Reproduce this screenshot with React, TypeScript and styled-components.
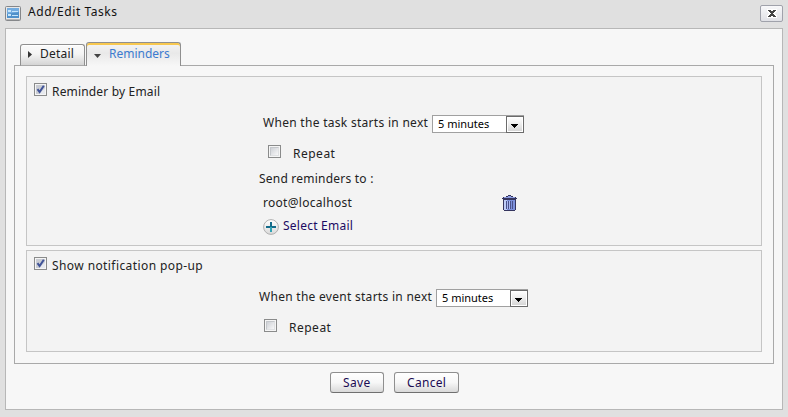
import React from "react";
import styled, { createGlobalStyle } from "styled-components";

const GlobalStyle = createGlobalStyle`
  * { box-sizing: border-box; }
  body { margin: 0; background: #e0e0e0; }
`;

const Window = styled.div`
  width: 788px;
  height: 417px;
  padding: 0 5px;
  background: #e0e0e0;
  font: 12px/18px "Noto Sans", sans-serif;
  color: #222;
`;

const TitleBar = styled.header`
  display: flex;
  align-items: flex-start;
  height: 28px;
  svg { margin-top: 6px; }
`;

const Text = styled.span<{ $w: number; $ls?: number; $color?: string; $top?: number; $left?: number; $size?: number }>`
  flex: none;
  width: ${(p) => p.$w}px;
  margin: ${(p) => p.$top ?? 0}px 0 0 ${(p) => p.$left ?? 0}px;
  font-size: ${(p) => p.$size ?? 12}px;
  letter-spacing: ${(p) => p.$ls ?? 0}px;
  color: ${(p) => p.$color ?? "#222"};
  white-space: nowrap;
  text-align: left;
`;

const CloseButton = styled.button`
  display: flex;
  width: 23px;
  height: 17px;
  margin: 5px 0 0 auto;
  padding: 3px 0 0 6px;
  border: 1px solid #a0a2ab;
  border-radius: 2px;
  background: linear-gradient(#f8f8fa, #e0e1e6);
  svg { flex: none; margin: 0; }
`;

const Panel = styled.main`
  width: 778px;
  height: 382px;
  padding: 13px 8px 0;
  border: 1px solid #b7b7b7;
  background: #f7f7f7;
`;

const Tabs = styled.nav`
  display: flex;
  align-items: flex-end;
  gap: 1px;
  height: 24px;
  margin: 0 0 -1px 6px;
`;

const Tab = styled.div<{ $active?: boolean }>`
  position: relative;
  display: flex;
  width: ${(p) => (p.$active ? 95 : 65)}px;
  height: ${(p) => (p.$active ? 24 : 22)}px;
  border: 1px solid #8f8f8f;
  border-bottom: ${(p) => (p.$active ? "0" : "1px solid #a9a9a9")};
  border-radius: 3px 3px 0 0;
  background: ${(p) => (p.$active ? "linear-gradient(#f4f4f4, #e9e9e9 45%, #f7f7f7)" : "linear-gradient(#fafafa, #f4f4f4 45%, #d4d4d4)")};
  box-shadow: inset ${(p) => (p.$active ? "0 2px #f8c84f" : "0 1px #fff")};
`;

const TabBody = styled.section`
  width: 760px;
  height: 299px;
  padding: 10px 11px 0;
  border: 1px solid #a9a9a9;
`;

const Group = styled.div<{ $h: number }>`
  width: 736px;
  height: ${(p) => p.$h}px;
  margin-bottom: 4px;
  border: 1px solid #c5c5c5;
  background: #f3f3f3;
`;

const Line = styled.div<{ $h: number; $left?: number }>`
  display: flex;
  align-items: flex-start;
  height: ${(p) => p.$h}px;
  padding-left: ${(p) => p.$left ?? 0}px;
`;

const Box = styled.span`
  display: block;
  flex: none;
  width: 13px;
  height: 13px;
  padding: 1px;
  border: 1px solid #8a8b8b;
  background: #f5f5f5;
  svg { display: block; }
`;

const BoxFill = styled.span`
  display: block;
  width: 9px;
  height: 9px;
  border: 1px solid #c4c7cb;
  border-right-color: #dfe1e3;
  border-bottom-color: #dfe1e3;
  background: linear-gradient(135deg, #ced1d6, #f7f7f8);
`;

const SelectBox = styled.div<{ $left: number }>`
  display: flex;
  flex: none;
  width: 92px;
  height: 18px;
  margin-left: ${(p) => p.$left}px;
  border: 1px solid #a0a0a0;
  background: #fff;
`;

const Arrow = styled.span`
  display: block;
  width: 18px;
  height: 17px;
  margin: 0 -1px 0 auto;
  border: 1px solid #6b6b6b;
  background: linear-gradient(#fff, #eee 45%, #d3d3d3);
  box-shadow: inset 0 0 0 1px #fff;
  svg { display: block; margin: 7px 0 0 4px; }
`;

const Actions = styled.footer`
  display: flex;
  gap: 10px;
  padding: 8px 0 0 316px;
`;

const Button = styled.button<{ $w: number }>`
  display: flex;
  width: ${(p) => p.$w}px;
  height: 21px;
  padding: 1px 0 0 12px;
  border: 1px solid #8f8f8f;
  border-bottom-color: #6f6f6f;
  border-radius: 3px;
  background: linear-gradient(#fff, #f7f7f7 50%, #d9d9d9);
  font: inherit;
`;

function Check({ checked = false }: { checked?: boolean }) {
  return (
    <Box>
      {checked ? (
        <svg width="9" height="9" viewBox="0 0 9 9">
          <rect width="9" height="9" fill="#c9ccd3" />
          <path d="M3 9L9 3V9z" fill="#e7e9ee" />
          <path d="M1.5 4.2L3.6 7L7.8 0.8" fill="none" stroke="#405398" strokeWidth="2" />
        </svg>
      ) : (
        <BoxFill />
      )}
    </Box>
  );
}

function Select({ left }: { left: number }) {
  return (
    <SelectBox $left={left}>
      <Text $w={60} $size={11} $left={5} $top={-1} $color="#000">5 minutes</Text>
      <Arrow>
        <svg width="7" height="4" shapeRendering="crispEdges"><path d="M0 0H7V1H6V2H5V3H4V4H3V3H2V2H1V1H0z" /></svg>
      </Arrow>
    </SelectBox>
  );
}

const FormIcon = () => (
  <svg width="16" height="15" viewBox="0 0 16 15">
    <rect x=".5" y=".5" width="15" height="14" rx="1" fill="#e8e8e8" stroke="#85878a" />
    <rect x="2" y="2" width="12" height="10" fill="#4f91cb" />
    <path d="M2 2H14V6L2 8z" fill="#73ace0" />
    <path d="M3 4h3v2H3zM3 8h3v2H3zM7 5h6v1H7zM7 9h6v1H7z" fill="#c5e5fb" />
    <path d="M1 13.5H15" stroke="#b5b5b5" />
  </svg>
);

const Trash = () => (
  <svg width="15" height="16" viewBox="0 0 15 16" shapeRendering="crispEdges">
    <path d="M6 0H9V1H11V2H14V3H15V4H14V15H13V16H2V15H1V4H0V3H1V2H4V1H6z" fill="#35355e" />
    <path d="M6 1H9V2H6zM2 2H13V3H2z" fill="#8c9ce0" />
    <rect x="2" y="5" width="11" height="10" fill="#7c90dc" />
    <rect x="2" y="5" width="3" height="10" fill="#bfcdf8" />
    <path d="M4 6h1v8H4zM6 6h1v8H6zM8 6h1v8H8zM10 6h1v8h-1z" fill="#4b528b" />
    <path d="M5 6h1v8H5zM7 6h1v8H7z" fill="#a8b8f4" />
  </svg>
);

const Plus = () => (
  <svg width="16" height="16" viewBox="0 0 16 16">
    <defs><linearGradient id="plusFill" x2="0" y2="1"><stop stopColor="#fff" /><stop offset="1" stopColor="#d9d9d9" /></linearGradient></defs>
    <circle cx="8" cy="8" r="7.4" fill="url(#plusFill)" stroke="#b0b0b0" />
    <path d="M3 8H13" stroke="#146b8a" strokeWidth="2" />
    <path d="M8 3V8" stroke="#146b8a" strokeWidth="2" />
    <path d="M8 8V13" stroke="#30a4b5" strokeWidth="2" />
  </svg>
);

const Glyph = styled.span<{ $left: number; $top: number }>`
  display: block;
  flex: none;
  margin: ${(p) => p.$top}px 0 0 ${(p) => p.$left}px;
  svg { display: block; }
`;

export default function App() {
  return (
    <>
      <GlobalStyle />
      <Window>
        <TitleBar>
          <FormIcon />
          <Text $w={95} $left={7} $top={3} $ls={0.55} $color="#111">Add/Edit Tasks</Text>
          <CloseButton aria-label="Close">
            <svg width="10" height="9" viewBox="0 0 10 9" shapeRendering="crispEdges">
              <path d="M1 1H4V2H6V1H9V2H8V3H7V4H6V5H7V6H8V7H9V8H6V7H4V8H1V7H2V6H3V5H4V4H3V3H2V2H1z" fill="#444" stroke="#fff" strokeWidth="2" paintOrder="stroke" />
            </svg>
          </CloseButton>
        </TitleBar>
        <Panel>
          <Tabs>
            <Tab>
              <Glyph $left={7} $top={6}><svg width="4" height="7"><path d="M0 0L4 3.5L0 7z" fill="#333" /></svg></Glyph>
              <Text $w={35} $left={8} $ls={0.2}>Detail</Text>
            </Tab>
            <Tab $active>
              <Glyph $left={7} $top={11}><svg width="7" height="4"><path d="M0 0H7L3.5 4z" fill="#444" /></svg></Glyph>
              <Text $w={62} $left={8} $top={2} $color="#3c7bd0">Reminders</Text>
            </Tab>
          </Tabs>
          <TabBody>
            <Group $h={170}>
              <Line $h={38} $left={7}>
                <Glyph $left={0} $top={6}><Check checked /></Glyph>
                <Text $w={110} $left={5} $top={6} $ls={0.17}>Reminder by Email</Text>
              </Line>
              <Line $h={30} $left={236}>
                <Text $w={165} $top={-1} $ls={0.29}>When the task starts in next</Text>
                <Select left={4} />
              </Line>
              <Line $h={25} $left={241}>
                <Check />
                <Text $w={43} $left={12} $ls={0.5}>Repeat</Text>
              </Line>
              <Line $h={24} $left={232}><Text $w={115} $ls={0.22}>Send reminders to :</Text></Line>
              <Line $h={25} $left={236}>
                <Text $w={89} $ls={0.29}>root@localhost</Text>
                <Glyph $left={150} $top={1}><Trash /></Glyph>
              </Line>
              <Line $h={20} $left={236}>
                <Plus />
                <Text $w={75} $left={4} $top={-2} $ls={0.24} $color="#1b0b63">Select Email</Text>
              </Line>
            </Group>
            <Group $h={102}>
              <Line $h={38} $left={7}>
                <Glyph $left={0} $top={6}><Check checked /></Glyph>
                <Text $w={155} $left={5} $top={6} $ls={0.41}>Show notification pop-up</Text>
              </Line>
              <Line $h={30} $left={232}>
                <Text $w={173} $top={-1} $ls={0.28}>When the event starts in next</Text>
                <Select left={4} />
              </Line>
              <Line $h={20} $left={237}>
                <Check />
                <Text $w={43} $left={12} $ls={0.5}>Repeat</Text>
              </Line>
            </Group>
          </TabBody>
          <Actions>
            <Button $w={54}><Text $w={30} $ls={0.4} $color="#1b0b53">Save</Text></Button>
            <Button $w={65}><Text $w={41} $ls={0.3} $color="#1b0b53">Cancel</Text></Button>
          </Actions>
        </Panel>
      </Window>
    </>
  );
}
